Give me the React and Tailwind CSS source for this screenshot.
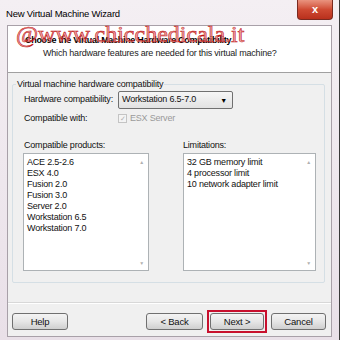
import React from "react";

const PRODUCTS = [
  "ACE 2.5-2.6",
  "ESX 4.0",
  "Fusion 2.0",
  "Fusion 3.0",
  "Server 2.0",
  "Workstation 6.5",
  "Workstation 7.0",
];

const LIMITS = ["32 GB memory limit", "4 processor limit", "10 network adapter limit"];

const ListBox = ({ items, className }) => (
  <div className={`relative h-[118px] bg-white border border-[#adb2b5] ${className}`}>
    <div className="pl-[3px] pt-[3px] flex flex-col">
      {items.map((it) => (
        <div key={it} className="h-[11px] leading-[11px] text-[9px] text-[#111] whitespace-nowrap">
          {it}
        </div>
      ))}
    </div>
    {/* disabled scrollbar arrows */}
    <div className="absolute right-[4px] top-[6px] text-[5px] leading-none text-[#b0b0b0]">▲</div>
    <div className="absolute right-[4px] bottom-[4px] text-[5px] leading-none text-[#b0b0b0]">▼</div>
  </div>
);

const WinButton = ({ children, className = "" }) => (
  <button
    className={`h-[17px] rounded-[3px] border border-[#707070] bg-gradient-to-b from-[#f4f4f4] via-[#e6e6e6] to-[#cfcfcf] text-[9.5px] leading-none text-[#111] ${className}`}
  >
    {children}
  </button>
);

const App = () => {
  return (
    <div
      className="w-[340px] h-[340px] bg-gradient-to-b from-[#f4eff3] to-[#e9e0e8] border-r border-[#3a3a3a] flex flex-col tracking-[-0.2px]"
      style={{ fontFamily: '"Liberation Sans", Arial, sans-serif' }}
    >
      {/* Title bar */}
      <div className="h-[25px] flex items-start justify-between">
        <div className="pl-[6px] pt-[8px] text-[9.5px] leading-[12px] text-black">
          New Virtual Machine Wizard
        </div>
        <div className="mr-[6px] w-[36px] h-[20px] rounded-b-[4px] border border-t-0 border-[#7a2a20] bg-gradient-to-b from-[#e9937f] via-[#cf4a33] to-[#b9301c] flex items-center justify-center text-white text-[11px] font-bold leading-none">
          x
        </div>
      </div>

      {/* Client area */}
      <div className="mx-[7px] mb-[3px] flex-1 border border-[#a8a0a8] flex flex-col bg-[#f0f0f0]">
        {/* Header */}
        <div className="relative h-[47px] bg-white border-b border-[#a0a0a0]">
          <div className="pl-[17px] pt-[8px] text-[9px] font-bold leading-[12px] text-black tracking-[-0.3px]">
            Choose the Virtual Machine Hardware Compatibility
          </div>
          <div className="pl-[35px] pt-[1px] text-[9px] leading-[12px] text-[#222]">
            Which hardware features are needed for this virtual machine?
          </div>
          {/* watermark */}
          <div
            className="absolute left-[8px] top-[-4px] text-[24px] leading-none tracking-normal text-[#ec8a8a]/75 [-webkit-text-stroke:0.6px_#c01515]"
            style={{ fontFamily: '"Liberation Serif", "Times New Roman", serif' }}
          >
            @www.chicchedicala.it
          </div>
        </div>

        {/* Body */}
        <div className="flex-1 flex flex-col">
          {/* Group box */}
          <div className="relative mt-[11px] ml-[4px] mr-[6px] h-[199px] border border-[#d5dfe5] rounded-[2px]">
            <div className="absolute left-[3px] top-[-7px] px-[1px] bg-[#f0f0f0] text-[9px] leading-[12px] text-[#111] whitespace-nowrap">
              Virtual machine hardware compatibility
            </div>

            <div className="pl-[11px] pt-[6px] flex items-center">
              <div className="w-[94px] text-[9px] text-[#111] whitespace-nowrap">Hardware compatibility:</div>
              <div className="w-[115px] h-[18px] border border-[#707070] rounded-[2px] bg-gradient-to-b from-[#f6f6f6] to-[#e2e2e2] flex items-center justify-between pl-[3px] pr-[5px]">
                <span className="text-[9px] text-[#111]">Workstation 6.5-7.0</span>
                <span className="text-[7px] leading-none text-black">▼</span>
              </div>
            </div>

            <div className="pl-[11px] pt-[3px] flex items-center">
              <div className="w-[94px] text-[9px] text-[#111] whitespace-nowrap">Compatible with:</div>
              <div className="w-[9px] h-[9px] border border-[#c4c4c4] bg-[#f4f4f4] flex items-center justify-center text-[7px] leading-none text-[#b0b0b0]">
                ✓
              </div>
              <span className="ml-[3px] text-[9px] text-[#9a9a9a]">ESX Server</span>
            </div>

            <div className="mt-[13px] flex">
              <div className="ml-[10px] w-[126px]">
                <div className="pl-[1px] text-[9px] leading-[12px] text-[#111]">Compatible products:</div>
                <ListBox items={PRODUCTS} className="mt-[2px]" />
              </div>
              <div className="ml-[34px] w-[133px]">
                <div className="text-[9px] leading-[12px] text-[#111]">Limitations:</div>
                <ListBox items={LIMITS} className="mt-[2px]" />
              </div>
            </div>
          </div>

          {/* Separator */}
          <div className="mt-[19px] border-t border-[#d8d8d8] border-b border-b-white" />

          {/* Buttons */}
          <div className="mt-[6px] flex items-center pl-[4px] pr-[5px]">
            <WinButton className="w-[56px]">Help</WinButton>
            <WinButton className="ml-auto w-[57px]">&lt; Back</WinButton>
            <div className="ml-[4px] p-[1px] border-2 border-[#c8102e]">
              <WinButton className="block w-[54px] h-[15px]">Next &gt;</WinButton>
            </div>
            <WinButton className="ml-[4px] w-[55px]">Cancel</WinButton>
          </div>
        </div>
      </div>
    </div>
  );
};

export default App;
